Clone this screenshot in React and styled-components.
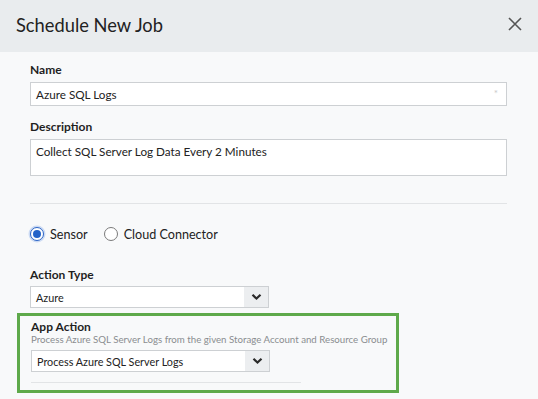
import React from "react";
import styled, { createGlobalStyle } from "styled-components";

const Global = createGlobalStyle`
  html, body { margin: 0; padding: 0; background: #f8f9fa; }
  body { font-family: Lato, "Open Sans", sans-serif; color: #222; }
  * { box-sizing: border-box; }
`;

const Page = styled.div`
  width: 538px;
  height: 399px;
  overflow: hidden;
  background: #f8f9fa;
`;

const Header = styled.div`
  height: 52px;
  background: #e9ecee;
  display: flex;
  align-items: center;
  justify-content: space-between;
  padding: 0 16px 0 16px;
`;

const Title = styled.h1`
  margin: 0;
  font-size: 18.3px;
  font-weight: 400;
  color: #222;
  margin-top: -2px;
`;

const Close = styled.button`
  border: 0;
  background: none;
  padding: 0;
  width: 14px;
  height: 14px;
  display: flex;
  cursor: pointer;
  margin-top: -4px;
`;

const Body = styled.div`
  padding: 11px 31px 0 30px;
  display: flex;
  flex-direction: column;
`;

const Field = styled.div`
  display: flex;
  flex-direction: column;
  margin-top: ${(p) => p.$mt || 0}px;
`;

const Label = styled.label`
  font-size: 12px;
  font-weight: 700;
  color: #1f1f1f;
  line-height: 14px;
  margin-bottom: ${(p) => p.$mb ?? 5}px;
`;

const Input = styled.div`
  height: 24px;
  border: 1px solid #cdd0d3;
  background: #fff;
  display: flex;
  align-items: center;
  justify-content: space-between;
  padding: 0 8px 0 5px;
  font-size: 11.7px;
  color: #222;
`;

const Req = styled.span`
  color: #c9c9c9;
  font-size: 10px;
  margin-top: -3px;
`;

const TextArea = styled.div`
  height: 37px;
  border: 1px solid #cdd0d3;
  background: #fff;
  padding: 4px 5px;
  font-size: 11.7px;
  color: #222;
`;

const Divider = styled.hr`
  border: 0;
  border-top: 1px solid #e2e4e6;
  margin: ${(p) => p.$mt || 0}px 0 0 0;
  width: ${(p) => p.$w || "100%"};
`;

const RadioRow = styled.div`
  display: flex;
  align-items: center;
  margin-top: 23px;
  height: 14px;
  font-size: 12.6px;
  color: #222;
`;

const RadioItem = styled.div`
  display: flex;
  align-items: center;
  gap: 6px;
  margin-right: 16px;
`;

const RadioCircle = styled.span`
  width: 14px;
  height: 14px;
  border-radius: 50%;
  border: 1px solid ${(p) => (p.$on ? "#2b64c6" : "#7a7a7a")};
  background: #fff;
  display: flex;
  align-items: center;
  justify-content: center;
  box-shadow: ${(p) => (p.$on ? "0 0 0 1.5px #cbdaf3" : "none")};
  &::after {
    content: "";
    width: 8px;
    height: 8px;
    border-radius: 50%;
    background: ${(p) => (p.$on ? "#2463c8" : "transparent")};
  }
`;

const Select = styled.div`
  width: 239px;
  height: 22px;
  border: 1px solid #cdd0d3;
  background: #fff;
  display: flex;
  align-items: stretch;
  font-size: 10.8px;
  color: #222;
`;

const SelectText = styled.div`
  flex: 1;
  display: flex;
  align-items: center;
  padding: 0 5px;
`;

const Chevron = styled.div`
  width: 24px;
  background: #eceef0;
  display: flex;
  align-items: center;
  justify-content: center;
`;

const Highlight = styled.div`
  margin: 5px 0 0 -13px;
  width: 382px;
  height: 80px;
  border: 3px solid #5ea94a;
  padding: 4px 0 0 11px;
  display: flex;
  flex-direction: column;
`;

const Hint = styled.div`
  font-size: 9.7px;
  color: #8a8d90;
  line-height: 11px;
  margin: 0 0 5px 0;
  white-space: nowrap;
`;

const ChevronIcon = () => (
  <svg width="11" height="8" viewBox="0 0 11 8">
    <path d="M1.5 1.8 L5.5 5.6 L9.5 1.8" fill="none" stroke="#2a2a2a" strokeWidth="2.2" />
  </svg>
);

const SelectBox = ({ value }) => (
  <Select>
    <SelectText>{value}</SelectText>
    <Chevron>
      <ChevronIcon />
    </Chevron>
  </Select>
);

export default function App() {
  return (
    <Page>
      <Global />
      <Header>
        <Title>Schedule New Job</Title>
        <Close aria-label="Close">
          <svg width="14" height="14" viewBox="0 0 14 14">
            <path d="M1 1 L13 13 M13 1 L1 13" stroke="#555" strokeWidth="1.6" />
          </svg>
        </Close>
      </Header>
      <Body>
        <Field>
          <Label>Name</Label>
          <Input>
            Azure SQL Logs
            <Req>*</Req>
          </Input>
        </Field>
        <Field $mt={14}>
          <Label>Description</Label>
          <TextArea>Collect SQL Server Log Data Every 2 Minutes</TextArea>
        </Field>
        <Divider $mt={27} />
        <RadioRow>
          <RadioItem>
            <RadioCircle $on />
            Sensor
          </RadioItem>
          <RadioItem>
            <RadioCircle />
            Cloud Connector
          </RadioItem>
        </RadioRow>
        <Field $mt={27}>
          <Label $mb={4}>Action Type</Label>
          <SelectBox value="Azure" />
        </Field>
        <Highlight>
          <Label $mb={0}>App Action</Label>
          <Hint>Process Azure SQL Server Logs from the given Storage Account and Resource Group</Hint>
          <SelectBox value="Process Azure SQL Server Logs" />
          <Divider $mt={10} $w="270px" />
        </Highlight>
      </Body>
    </Page>
  );
}
